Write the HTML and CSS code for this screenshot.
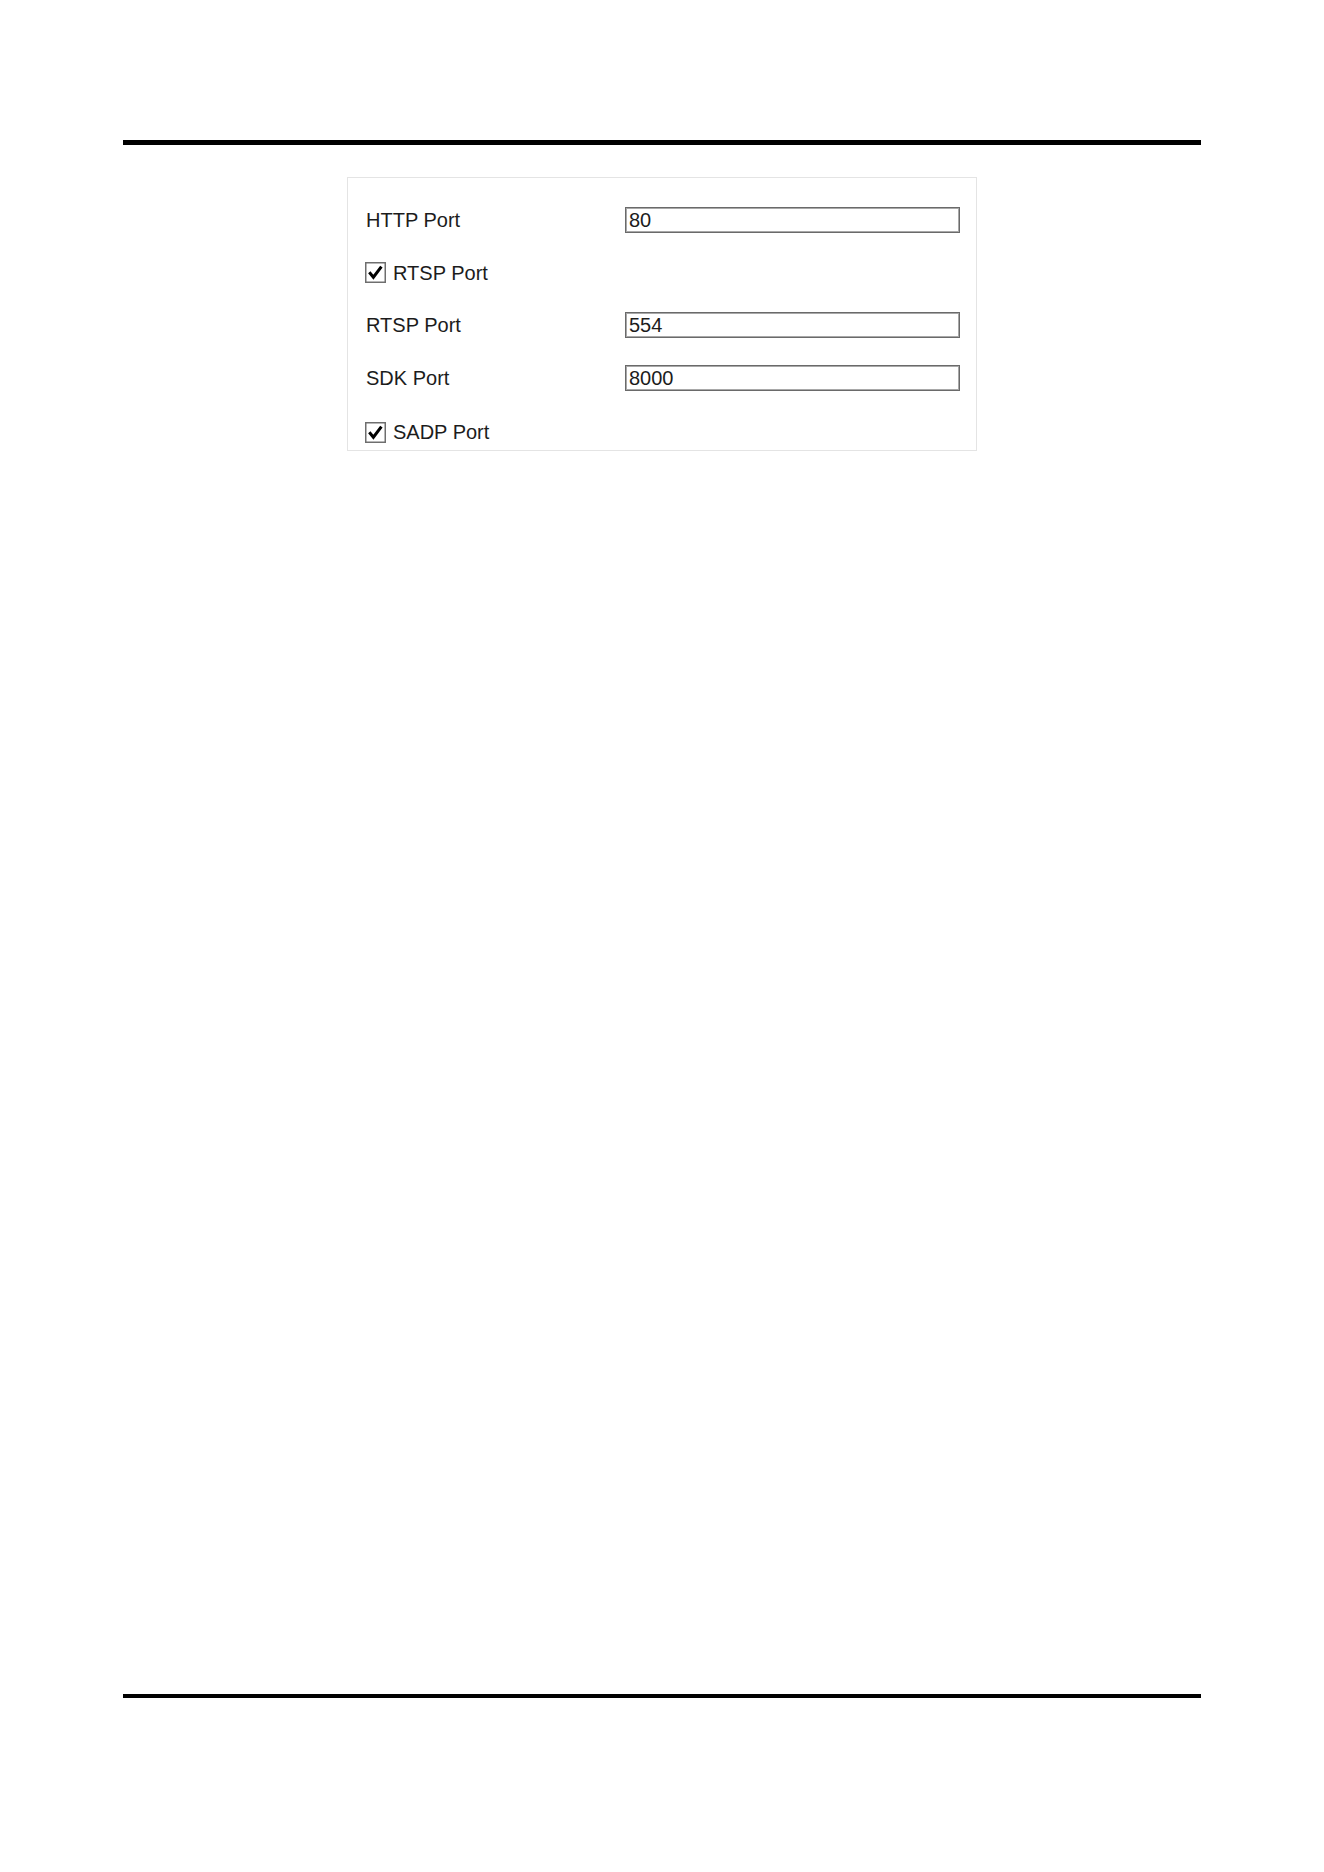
FILE: index.html
```html
<!DOCTYPE html>
<html>
<head>
<meta charset="utf-8">
<link rel="stylesheet" href="styles.css">
</head>
<body>
<div class="page">
  <div class="rule rule-top"></div>
  <div class="panel">
    <div class="row">
      <span class="label">HTTP Port</span>
      <div class="input">80</div>
    </div>
    <div class="row">
      <span class="check">
        <svg width="21" height="21" viewBox="0 0 21 21"><rect x="0.75" y="0.75" width="19.5" height="19.5" fill="#fff" stroke="#6e6e6e" stroke-width="1.5"/><path d="M4.3 10.2 L8.4 15.2 L16.4 4.6" fill="none" stroke="#000" stroke-width="3" stroke-linejoin="miter"/></svg>
      </span>
      <span class="label">RTSP Port</span>
    </div>
    <div class="row">
      <span class="label">RTSP Port</span>
      <div class="input">554</div>
    </div>
    <div class="row">
      <span class="label">SDK Port</span>
      <div class="input">8000</div>
    </div>
    <div class="row row-last">
      <span class="check">
        <svg width="21" height="21" viewBox="0 0 21 21"><rect x="0.75" y="0.75" width="19.5" height="19.5" fill="#fff" stroke="#6e6e6e" stroke-width="1.5"/><path d="M4.3 10.2 L8.4 15.2 L16.4 4.6" fill="none" stroke="#000" stroke-width="3" stroke-linejoin="miter"/></svg>
      </span>
      <span class="label">SADP Port</span>
    </div>
  </div>
  <div class="spacer"></div>
  <div class="rule rule-bottom"></div>
</div>
</body>
</html>
```

FILE: styles.css
```css
html, body {
  margin: 0;
  padding: 0;
  background: #fff;
}
.page {
  width: 1324px;
  height: 1872px;
  padding-top: 140px;
  box-sizing: border-box;
  font-family: "Liberation Sans", Arial, sans-serif;
  color: #1c1c1c;
}
.rule {
  margin-left: 123px;
  width: 1078px;
  background: #000;
}
.rule-top {
  height: 5px;
}
.rule-bottom {
  height: 4px;
}
.panel {
  margin-top: 32px;
  margin-left: 347px;
  width: 630px;
  height: 274px;
  box-sizing: border-box;
  border: 1px solid #e4e4e4;
  padding: 16px 0 0 18px;
}
.row {
  display: flex;
  align-items: center;
  height: 52.5px;
  font-size: 20px;
}
.row-last {
  height: 46px;
  padding-top: 10px;
  box-sizing: border-box;
}
.label {
  width: 259px;
  flex: none;
  line-height: 22px;
}
.check {
  flex: none;
  display: flex;
  width: 21px;
  height: 21px;
  margin-left: -1px;
  margin-right: 7px;
}
.check + .label {
  width: auto;
}
.input {
  flex: none;
  width: 335px;
  height: 26px;
  box-sizing: border-box;
  border: 1px solid #6a6a6a;
  box-shadow: inset 0 0 0 1px #a8a8a8;
  padding: 0 0 0 3px;
  line-height: 24px;
  font-size: 20px;
  color: #1c1c1c;
  background: #fff;
}
.spacer {
  height: 1243px;
}
```
